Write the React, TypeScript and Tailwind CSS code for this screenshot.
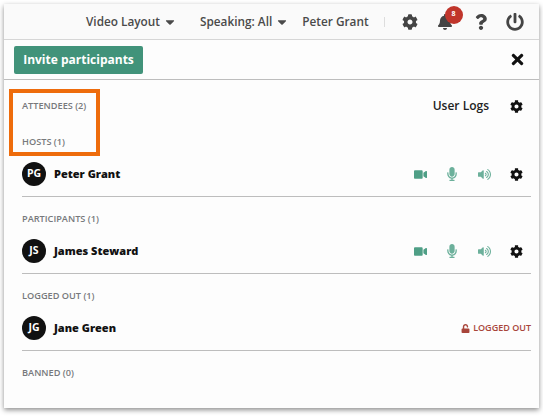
import { FaBell, FaCaretDown, FaCog, FaMicrophone, FaPowerOff, FaQuestion, FaTimes, FaUnlock, FaVideo, FaVolumeUp } from "react-icons/fa";

interface Attendee {
    initials: string;
    name: string;
    loggedOut?: boolean;
}

function SectionLabel({ children }: { children: string }) {
    return <div className="h-[14px] text-[9.2px] leading-[14px] font-semibold text-[#77797c]">{children}</div>;
}

function AttendeeRow({ initials, name, loggedOut }: Attendee) {
    return (
        <div className="flex h-[24px] items-center">
            <div className="flex h-6 w-6 items-center justify-center rounded-full bg-[#111111] text-[10.5px] font-bold text-white">
                {initials}
            </div>
            <span className="ml-2 text-[11px] font-extrabold text-[#111111]">{name}</span>
            {loggedOut ? (
                <div className="ml-auto flex items-center text-[9px] font-semibold text-[#a8453a]">
                    <FaUnlock size={9} className="mr-[3px]" />
                    LOGGED OUT
                </div>
            ) : (
                <div className="ml-auto flex items-center">
                    <FaVideo size={13} className="text-[#4f9f86]" />
                    <FaMicrophone size={14} className="ml-[18px] text-[#6cb09b]" />
                    <FaVolumeUp size={13} className="ml-[19px] text-[#6cb09b]" />
                    <FaCog size={13} className="mr-[8px] ml-[19px] text-[#111111]" />
                </div>
            )}
        </div>
    );
}

function Section({ label, attendee, last }: { label: string; attendee?: Attendee; last?: boolean }) {
    return (
        <div className={last ? "pt-[15px]" : "border-b border-[#bdbdbd] pt-[15px] pb-[10px]"}>
            <SectionLabel>{label}</SectionLabel>
            {attendee && (
                <div className="mt-[13px]">
                    <AttendeeRow {...attendee} />
                </div>
            )}
        </div>
    );
}

export default function App() {
    return (
        <div className="h-[416px] w-[543px] bg-white pt-1 pl-1 font-['Open_Sans',sans-serif]">
            <div className="relative h-[404px] w-[535px] bg-[#fdfdfd] shadow-[0_2px_5px_rgba(0,0,0,0.45)]">
                <div className="flex h-[36px] items-center border-b border-[#d6d6d6] bg-[#fafafa] pl-[82px] text-[11.8px] font-semibold whitespace-nowrap text-[#4a4a4a]">
                    <span>Video Layout</span>
                    <FaCaretDown size={14} className="ml-[3px]" />
                    <span className="ml-[23px]">Speaking: All</span>
                    <FaCaretDown size={14} className="ml-[3px]" />
                    <span className="ml-[13px]">Peter Grant</span>
                    <div className="ml-[15px] h-[10px] w-px bg-[#dddddd]" />
                    <FaCog size={16} className="ml-[17px] text-[#444444]" />
                    <div className="relative ml-[19px]">
                        <FaBell size={16} className="text-[#444444]" />
                        <div className="absolute -top-[8px] left-[8px] flex h-[18px] w-[18px] items-center justify-center rounded-full bg-[#c0352b] text-[7px] font-bold text-white">
                            8
                        </div>
                    </div>
                    <FaQuestion size={16} className="ml-[20px] text-[#444444]" />
                    <FaPowerOff size={18} className="ml-[17px] text-[#444444]" />
                </div>
                <div className="flex h-[40px] items-center border-b border-[#bdbdbd] pr-[13px] pl-[10px]">
                    <button className="flex h-[28px] w-[129px] items-center justify-center rounded-[2px] bg-[#41937a] text-[12px] font-bold whitespace-nowrap text-white">
                        Invite participants
                    </button>
                    <FaTimes size={17} className="ml-auto text-[#111111]" />
                </div>
                <div className="px-[18px] pr-[8px]">
                    <div className="flex h-[33px] items-end">
                        <SectionLabel>ATTENDEES (2)</SectionLabel>
                        <div className="mb-[-2px] ml-auto flex items-center">
                            <span className="text-[12px] font-semibold text-[#222222]">User Logs</span>
                            <FaCog size={13} className="mr-[8px] ml-[21px] text-[#111111]" />
                        </div>
                    </div>
                    <div className="mt-[7px]">
                        <Section label="HOSTS (1)" attendee={{ initials: "PG", name: "Peter Grant" }} />
                    </div>
                    <Section label="PARTICIPANTS (1)" attendee={{ initials: "JS", name: "James Steward" }} />
                    <Section label="LOGGED OUT (1)" attendee={{ initials: "JG", name: "Jane Green", loggedOut: true }} />
                    <Section label="BANNED (0)" last />
                </div>
                <div className="absolute top-[85px] left-[5px] h-[67px] w-[91px] border-[4px] border-[#ee6c0c]" />
            </div>
        </div>
    );
}
